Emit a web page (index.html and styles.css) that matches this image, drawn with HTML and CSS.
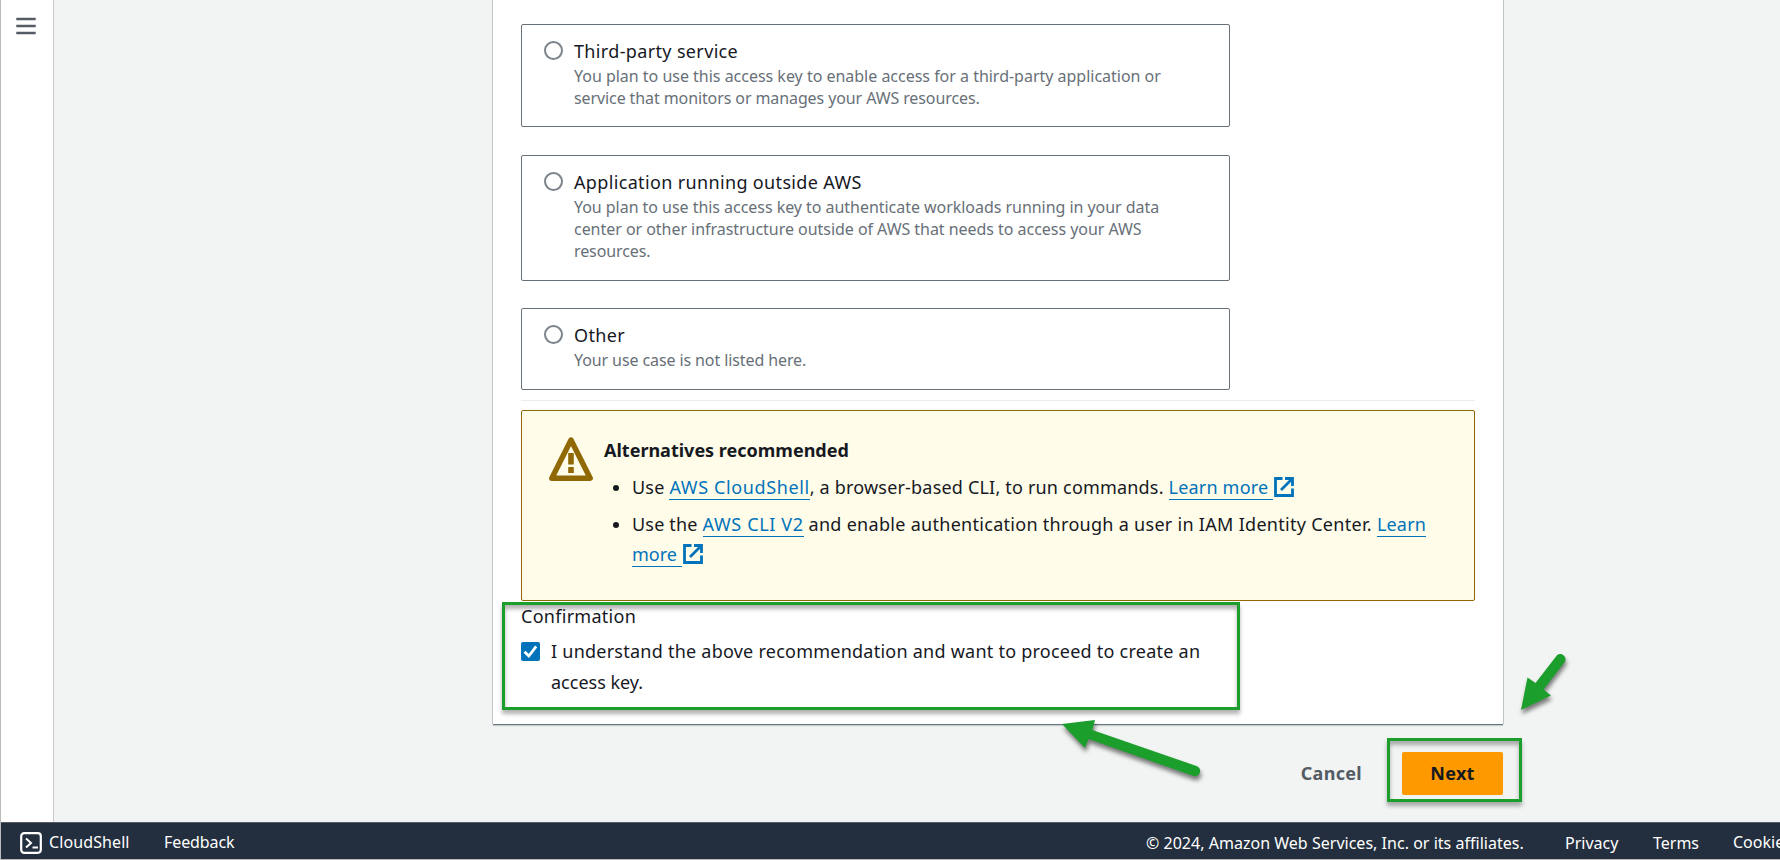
FILE: index.html
```html
<!DOCTYPE html>
<html lang="en">
<head>
<meta charset="utf-8">
<title>Create access key</title>
<link rel="stylesheet" href="styles.css">
</head>
<body>
<div class="app">
  <div class="body">
    <nav class="sidebar">
      <svg class="menu-icon" width="20" height="18" viewBox="0 0 20 18"><path d="M.3 2h19.4M.3 9h19.4M.3 16h19.4" stroke="#545b64" stroke-width="2.6"/></svg>
    </nav>
    <main class="content">
      <section class="card">
        <div class="tiles">
          <label class="tile tile-two">
            <span class="radio"></span>
            <span class="tile-text">
              <span class="tile-title">Third-party service</span>
              <span class="tile-desc"><span class="wide">You plan to use this access key to enable access for a third-party application or</span><br>service that monitors or manages your AWS resources.</span>
            </span>
          </label>
          <label class="tile tile-three">
            <span class="radio"></span>
            <span class="tile-text">
              <span class="tile-title">Application running outside AWS</span>
              <span class="tile-desc"><span class="mid">You plan to use this access key to authenticate workloads running in your data</span><br><span class="mid">center or other infrastructure outside of AWS that needs to access your AWS</span><br>resources.</span>
            </span>
          </label>
          <label class="tile tile-one">
            <span class="radio"></span>
            <span class="tile-text">
              <span class="tile-title">Other</span>
              <span class="tile-desc">Your use case is not listed here.</span>
            </span>
          </label>
        </div>
        <hr class="divider">
        <div class="alert">
          <svg class="warn-icon" width="44" height="44" viewBox="0 0 44 44"><path d="M22 3 41.200 41.200H2.800Z" fill="none" stroke="#906806" stroke-width="5.4" stroke-linejoin="round"/><path d="M22 16v11.500M22 30v6" stroke="#906806" stroke-width="5.6"/></svg>
          <div class="alert-text">
            <div class="alert-title">Alternatives recommended</div>
            <ul class="alert-list">
              <li>Use <a class="service">AWS CloudShell</a>, a browser-based CLI, to run commands. <a>Learn more&nbsp;</a><svg class="ext" width="20" height="20" viewBox="0 0 20 20"><path d="M8.5 1.5h-7v17h17v-7" /><path d="M11 1.5h7.5V9M18 2 7 13"/></svg></li>
              <li>Use the <a class="service">AWS CLI V2</a><span class="auth"> and enable authentication through a user in IAM Identity Center. </span><a>Learn</a><br><a class="more">more&nbsp;</a><svg class="ext" width="20" height="20" viewBox="0 0 20 20"><path d="M8.5 1.5h-7v17h17v-7" /><path d="M11 1.5h7.5V9M18 2 7 13"/></svg></li>
            </ul>
          </div>
        </div>
        <div class="confirm">
          <div class="confirm-title">Confirmation</div>
          <label class="confirm-row">
            <svg class="check" width="19" height="19" viewBox="0 0 19 19"><rect width="19" height="19" rx="2" fill="#0073bb"/><path d="m3.5 9.7 4.3 4.3 7.4-9.6" fill="none" stroke="#fff" stroke-width="2.8"/></svg>
            <span class="confirm-text">I understand the above recommendation and want to proceed to create an<br><span class="more">access key.</span></span>
          </label>
        </div>
      </section>
      <div class="actions">
        <button class="btn-link">Cancel</button>
        <button class="btn-primary">Next</button>
      </div>
    </main>
  </div>
  <footer class="footer">
    <svg class="shell-icon" width="22" height="22" viewBox="0 0 22 22"><rect x="1.2" y="1.2" width="19.6" height="19.6" rx="3" fill="none" stroke="#fff" stroke-width="2.2"/><path d="m6 6.5 5 4.5-5 4.5M12.5 15.5H18" fill="none" stroke="#fff" stroke-width="2"/></svg>
    <span class="f-shell">CloudShell</span>
    <span class="f-feedback">Feedback</span>
    <span class="f-copy">© 2024, Amazon Web Services, Inc. or its affiliates.</span>
    <span class="f-privacy">Privacy</span>
    <span class="f-terms">Terms</span>
    <span class="f-cookie">Cookie</span>
  </footer>
  <div class="mark mark-confirm"></div>
  <div class="mark mark-next"></div>
  <svg class="arrows" width="1780" height="860" viewBox="0 0 1780 860" fill="#1b9e2b">
    <g><path d="M1062 724 1095 720 1092.300 730 1196.500 766A5.200 5.200 0 0 1 1193.500 776L1088.500 739 1085 748Z"/></g>
    <g><path d="M1521 710 1527.500 677.500 1535.500 683 1557 655.300A5.200 5.200 0 0 1 1565 661.500L1543.500 689.500 1551 695.500Z"/></g>
  </svg>
</div>
</body>
</html>
```
FILE: styles.css
```css
* { box-sizing: border-box; }
body { margin: 0; font-family: "Noto Sans", sans-serif; font-size: 18px; color: #16191f; }
.app { position: relative; width: 1780px; height: 860px; overflow: hidden; display: flex; flex-direction: column; background: #f2f3f3; border-left: 1px solid #bbb; border-bottom: 1px solid #bbb; }
.body { flex: 1; min-height: 0; display: flex; }
.sidebar { width: 53px; background: #fff; border-right: 1px solid #c6cacd; padding: 17px 0 0 15px; }
.menu-icon { display: block; }
.content { margin-left: 439px; width: 1010px; }
.card { height: 724px; background: #fff; padding: 24px 28px 0 28px; box-shadow: 0 1px 0 #68777f, 0 2px 1px #c5cccd, -1px 0 0 #bfc4c6, 1px 0 0 #bfc4c6; }
.tiles { display: flex; flex-direction: column; width: 709px; }
.tile { display: flex; border: 1px solid #687078; border-radius: 2px; padding: 12px 0 0 22px; margin-bottom: 28px; }
.tile-two { height: 103px; }
.tile-three { height: 126px; margin-bottom: 27px; }
.tile-one { height: 82px; margin-bottom: 0; }
.radio { width: 19px; height: 19px; margin-top: 4px; border: 2px solid #7b838b; border-radius: 50%; flex: none; }
.tile-text { margin-left: 11px; white-space: nowrap; }
.tile-title { display: block; line-height: 28px; letter-spacing: .35px; }
.tile-desc { display: block; font-size: 16px; line-height: 22px; color: #687078; letter-spacing: -.1px; }
.wide { letter-spacing: -.015px; }
.mid { letter-spacing: -.04px; }
.divider { border: 0; height: 1px; margin: 10px 0 9px; background: #eaeded; }
.alert { display: flex; width: 954px; height: 191px; background: #fffce9; border: 1px solid #906806; border-radius: 2px; padding: 26px 0 0 27px; }
.warn-icon { flex: none; }
.alert-text { margin-left: 11px; white-space: nowrap; }
.alert-title { font-weight: 700; line-height: 30px; margin-top: -2px; }
.alert-list { margin: 7px 0 0; padding: 0 0 0 28px; line-height: 30px; letter-spacing: .19px; }
.alert-list li { margin-bottom: 7px; }
.alert-list a { color: #0073bb; border-bottom: 1px solid #0073bb; }
.service { letter-spacing: .62px; }
.auth { letter-spacing: .29px; }
.more { letter-spacing: 0; }
.ext { vertical-align: -3px; margin-left: 1px; fill: none; stroke: #0073bb; stroke-width: 2.8; }
.confirm-title { line-height: 30px; letter-spacing: .28px; }
.confirm-row { display: flex; margin-top: 5px; white-space: nowrap; }
.check { margin-top: 6px; flex: none; }
.confirm-text { margin-left: 11px; line-height: 31px; letter-spacing: .24px; }
.actions { display: flex; justify-content: flex-end; align-items: center; padding-top: 28px; }
button { font: 700 18px/40px "Noto Sans", sans-serif; border: 0; padding: 0 0 2px; letter-spacing: .3px; }
.btn-link { background: none; color: #545b64; margin-right: 40px; }
.btn-primary { width: 101px; height: 43px; background: #f90; border-radius: 2px; color: #16191f; }
.footer { height: 37px; flex: none; display: flex; background: #232f3e; border-top: 1px solid #545b64; color: #fff; font-size: 16px; line-height: 39px; white-space: nowrap; padding-left: 19px; }
.footer span { flex: none; }
.shell-icon { margin: 9px 7px 0 0; flex: none; }
.f-shell { width: 115px; letter-spacing: .1px; }
.f-feedback { width: 982px; letter-spacing: -.1px; }
.f-copy, .f-privacy, .f-terms { line-height: 41px; }
.f-copy { width: 419px; letter-spacing: .02px; }
.f-privacy { width: 88px; }
.f-terms { width: 80px; }
.mark { position: absolute; border: 3px solid #1b9e2b; box-shadow: 0 4px 4px rgba(0,0,0,.3), inset 0 4px 4px rgba(0,0,0,.3); }
.mark-confirm { left: 501px; top: 602px; width: 738px; height: 108px; }
.mark-next { left: 1386px; top: 738px; width: 135px; height: 64px; }
.arrows { position: absolute; left: -1px; top: 0; }
.arrows g { filter: drop-shadow(1px 4px 2px rgba(0,0,0,.5)); }
```
